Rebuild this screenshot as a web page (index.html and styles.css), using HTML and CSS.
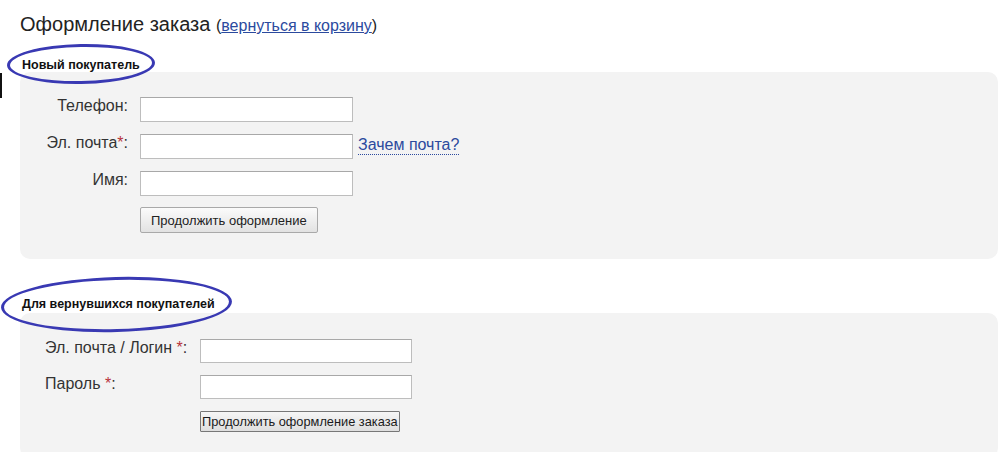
FILE: index.html
```html
<!DOCTYPE html>
<html lang="ru">
<head>
    <meta charset="UTF-8">
    <link rel="stylesheet" href="styles.css">
    <title>Оформление заказа</title>
</head>
<body>
    <div class="edge-mark"></div>

    <div class="page">
        <h1 class="page-title">Оформление заказа <span class="back">(<a href="#">вернуться в корзину</a>)</span></h1>

        <h2 class="section-title section-new">Новый покупатель</h2>
        <div class="panel panel-new">
            <div class="row">
                <label class="label">Телефон:</label>
                <input class="field" type="text">
            </div>
            <div class="row">
                <label class="label">Эл. почта<span class="req">*</span>:</label>
                <input class="field" type="text">
                <a class="why" href="#">Зачем почта?</a>
            </div>
            <div class="row">
                <label class="label">Имя:</label>
                <input class="field" type="text">
            </div>
            <div class="row">
                <span class="label"></span>
                <button class="btn">Продолжить оформление</button>
            </div>
        </div>

        <h2 class="section-title section-back">Для вернувшихся покупателей</h2>
        <div class="panel panel-back">
            <div class="row">
                <label class="label">Эл. почта / Логин <span class="req">*</span>:</label>
                <input class="field" type="text">
            </div>
            <div class="row">
                <label class="label">Пароль <span class="req">*</span>:</label>
                <input class="field" type="password">
            </div>
            <div class="row">
                <span class="label"></span>
                <button class="btn btn-old">Продолжить оформление заказа</button>
            </div>
        </div>
    </div>
</body>
</html>
```

FILE: styles.css
```css
body {
    margin: 0;
    background: #fff;
    font-family: 'Liberation Sans', Arial, sans-serif;
    color: #333;
    overflow: hidden;
}

.edge-mark {
    position: absolute;
    left: 0;
    top: 73px;
    width: 2px;
    height: 25px;
    background: #111;
}

.page {
    padding: 12px 2px 0 20px;
}

.page-title {
    margin: 0;
    font-size: 20px;
    font-weight: normal;
    line-height: 24px;
    color: #222;
}

.back {
    font-size: 16px;
}

.back a {
    color: #2b4a9e;
}

/* section headings with the blue pen circle drawn over them */
.section-title {
    position: relative;
    margin: 0;
    padding-left: 2px;
    font-size: 12.5px;
    font-weight: bold;
    color: #111;
    line-height: 14px;
}

.section-title::before {
    content: "";
    position: absolute;
    border: 3.5px solid #3939b3;
    border-radius: 50%;
}

.section-new {
    margin-top: 20px;
}

.section-new::before {
    left: -13px;
    top: -14px;
    width: 142px;
    height: 34px;
    transform: rotate(-1deg);
}

.section-back {
    margin-top: 38px;
}

.section-back::before {
    left: -19px;
    top: -20px;
    width: 225px;
    height: 49px;
    transform: rotate(-1.5deg);
}

.panel {
    background: #f3f3f3;
    border-radius: 10px;
    display: flex;
    flex-direction: column;
    gap: 12px;
}

.panel-new {
    margin-top: 0;
    padding: 25px 0 26px 0;
}

.panel-back {
    margin-top: 2px;
    padding: 26px 0 26px 25px;
    gap: 12px;
}

.row {
    display: flex;
    align-items: flex-start;
}

.label {
    font-size: 16px;
    line-height: 18px;
    color: #333;
}

.panel-new .label {
    width: 108px;
    margin-right: 12px;
    text-align: right;
}

.panel-back .label {
    width: 155px;
}

.req {
    color: #b8333a;
}

.field {
    box-sizing: border-box;
    width: 213px;
    height: 25px;
    margin: 0;
    border: 1px solid #bdbdbd;
    border-top-color: #a8a8a8;
    background: #fff;
}

.panel-back .field {
    width: 212px;
    height: 24px;
}

.why {
    margin-left: 5px;
    margin-top: 2px;
    font-size: 16px;
    color: #2b4a9e;
    text-decoration: none;
    border-bottom: 1px dotted #2b4a9e;
    line-height: 18px;
}

.btn {
    box-sizing: border-box;
    height: 26px;
    padding: 0 10px;
    margin-top: -1px;
    border: 1px solid #a9a9a9;
    border-radius: 2px;
    background: linear-gradient(#fbfbfb, #e2e2e2);
    font-family: 'Liberation Sans', Arial, sans-serif;
    font-size: 13px;
    color: #222;
}

.btn-old {
    height: 21px;
    padding: 0 1px;
    margin-top: 0;
    border-color: #777;
    border-radius: 1px;
    background: linear-gradient(#f6f6f6, #dedede);
    font-size: 12.8px;
    color: #1a1a1a;
}
```
